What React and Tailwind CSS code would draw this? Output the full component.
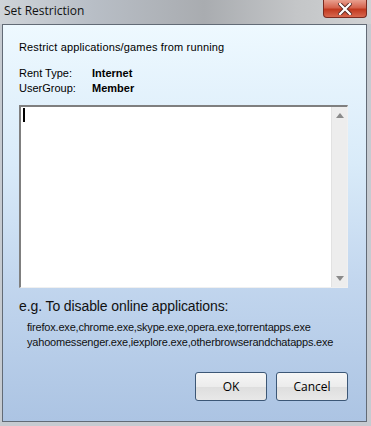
import React from "react";

const App = () => {
  return (
    <div
      className="w-[371px] h-[426px] flex flex-col bg-[#c6cbd1] overflow-hidden"
      style={{ fontFamily: '"Liberation Sans", Arial, sans-serif' }}
    >
      {/* Title bar */}
      <div className="h-[24px] flex items-start justify-between bg-[linear-gradient(90deg,#cfd4d9_0%,#b8bec6_25%,#a9acb0_55%,#c4c6c8_80%,#d0d2d4_100%)]">
        <div className="pl-[4px] pt-[1px] text-[12px] leading-[20px] text-[#111] font-['Open_Sans',sans-serif]">
          Set Restriction
        </div>
        <div className="mr-[4px] w-[44px] h-[18px] rounded-b-[4px] border border-t-0 border-[#7a2b20] bg-[linear-gradient(180deg,#e9a08f_0%,#d5634d_45%,#c1391f_55%,#d8674e_100%)] flex items-center justify-center">
          <svg width="14" height="12" viewBox="0 0 14 12">
            <path
              d="M2 1 L12 11 M12 1 L2 11"
              stroke="#5a2a24"
              strokeWidth="4"
              strokeLinecap="square"
            />
            <path
              d="M2 1 L12 11 M12 1 L2 11"
              stroke="#ffffff"
              strokeWidth="2.2"
              strokeLinecap="square"
            />
          </svg>
        </div>
      </div>

      {/* Client area */}
      <div className="flex-1 ml-[2px] mr-[4px] mb-[4px] border border-[#626b76] bg-[linear-gradient(180deg,#eef9ff_0%,#d9ebf9_35%,#c2d6ee_65%,#acc4e3_100%)] flex flex-col pl-[16px] pr-[18px] text-[11px] text-black">
        <div className="pt-[16px] leading-[13px] tracking-[0.15px]">
          Restrict applications/games from running
        </div>
        <div className="mt-[12px] flex flex-col leading-[15px]">
          <div className="flex">
            <span className="w-[73px]">Rent Type:</span>
            <span className="font-bold">Internet</span>
          </div>
          <div className="flex">
            <span className="w-[73px]">UserGroup:</span>
            <span className="font-bold">Member</span>
          </div>
        </div>

        {/* Text area */}
        <div className="mt-[9px] h-[183px] flex border-t-2 border-l-2 border-[#7f7f7f] border-r border-b border-r-[#f0f0f0] border-b-[#f0f0f0] bg-white">
          <div className="flex-1 pl-[2px] pt-[1px]">
            <div className="w-[2px] h-[14px] bg-black" />
          </div>
          <div className="w-[16px] bg-[#ededed] border-l border-[#e2e2e2] flex flex-col items-center justify-between py-[6px]">
            <svg width="8" height="5" viewBox="0 0 8 5">
              <path d="M4 0 L8 5 L0 5 Z" fill="#8a8a8a" />
            </svg>
            <svg width="8" height="5" viewBox="0 0 8 5">
              <path d="M0 0 L8 0 L4 5 Z" fill="#8a8a8a" />
            </svg>
          </div>
        </div>

        <div className="mt-[10px] text-[14px] leading-[16px] text-[#111] tracking-[-0.1px]">
          e.g. To disable online applications:
        </div>
        <div className="mt-[6px] pl-[8px] leading-[15px] text-[#111] tracking-[-0.2px]">
          <div>firefox.exe,chrome.exe,skype.exe,opera.exe,torrentapps.exe</div>
          <div>yahoomessenger.exe,iexplore.exe,otherbrowserandchatapps.exe</div>
        </div>

        <div className="mt-[22px] flex justify-end gap-[9px]">
          <button className="w-[72px] h-[29px] rounded-[3px] border border-[#3c5776] bg-[linear-gradient(180deg,#f6f6f6_0%,#ececec_50%,#dedede_52%,#e8e8e8_100%)] text-[12px] text-black font-['Open_Sans',sans-serif]">
            OK
          </button>
          <button className="w-[72px] h-[29px] rounded-[3px] border border-[#3c5776] bg-[linear-gradient(180deg,#f6f6f6_0%,#ececec_50%,#dedede_52%,#e8e8e8_100%)] text-[12px] text-black font-['Open_Sans',sans-serif]">
            Cancel
          </button>
        </div>
      </div>
    </div>
  );
};

export default App;
